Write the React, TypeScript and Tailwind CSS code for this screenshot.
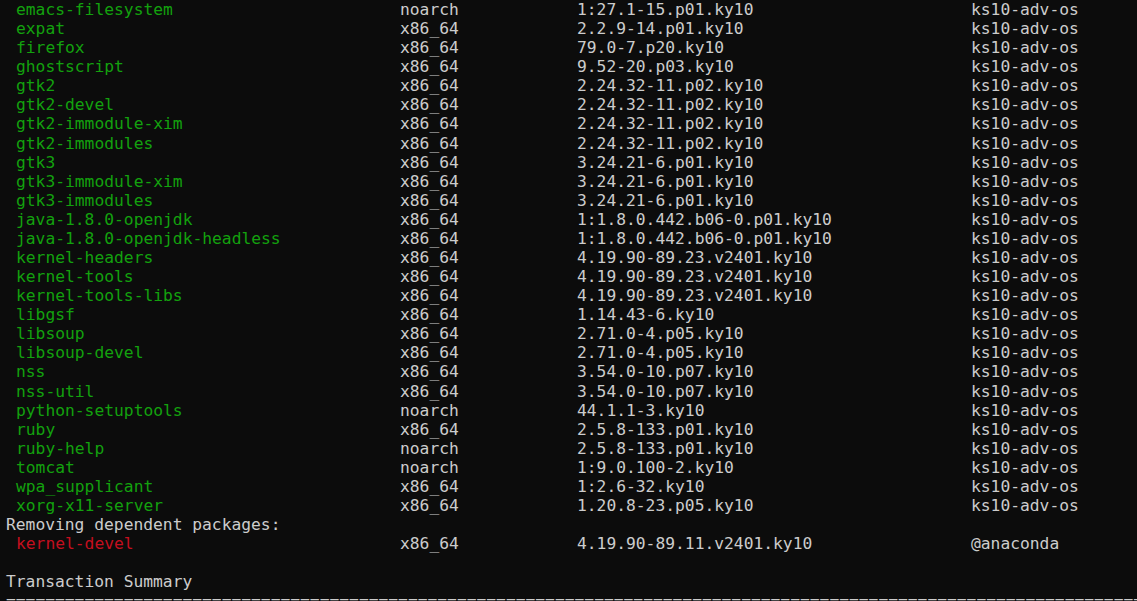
import React from "react";

type Pkg = [string, string, string, string];

const pkgs: Pkg[] = [
  ["emacs-filesystem", "noarch", "1:27.1-15.p01.ky10", "ks10-adv-os"],
  ["expat", "x86_64", "2.2.9-14.p01.ky10", "ks10-adv-os"],
  ["firefox", "x86_64", "79.0-7.p20.ky10", "ks10-adv-os"],
  ["ghostscript", "x86_64", "9.52-20.p03.ky10", "ks10-adv-os"],
  ["gtk2", "x86_64", "2.24.32-11.p02.ky10", "ks10-adv-os"],
  ["gtk2-devel", "x86_64", "2.24.32-11.p02.ky10", "ks10-adv-os"],
  ["gtk2-immodule-xim", "x86_64", "2.24.32-11.p02.ky10", "ks10-adv-os"],
  ["gtk2-immodules", "x86_64", "2.24.32-11.p02.ky10", "ks10-adv-os"],
  ["gtk3", "x86_64", "3.24.21-6.p01.ky10", "ks10-adv-os"],
  ["gtk3-immodule-xim", "x86_64", "3.24.21-6.p01.ky10", "ks10-adv-os"],
  ["gtk3-immodules", "x86_64", "3.24.21-6.p01.ky10", "ks10-adv-os"],
  ["java-1.8.0-openjdk", "x86_64", "1:1.8.0.442.b06-0.p01.ky10", "ks10-adv-os"],
  ["java-1.8.0-openjdk-headless", "x86_64", "1:1.8.0.442.b06-0.p01.ky10", "ks10-adv-os"],
  ["kernel-headers", "x86_64", "4.19.90-89.23.v2401.ky10", "ks10-adv-os"],
  ["kernel-tools", "x86_64", "4.19.90-89.23.v2401.ky10", "ks10-adv-os"],
  ["kernel-tools-libs", "x86_64", "4.19.90-89.23.v2401.ky10", "ks10-adv-os"],
  ["libgsf", "x86_64", "1.14.43-6.ky10", "ks10-adv-os"],
  ["libsoup", "x86_64", "2.71.0-4.p05.ky10", "ks10-adv-os"],
  ["libsoup-devel", "x86_64", "2.71.0-4.p05.ky10", "ks10-adv-os"],
  ["nss", "x86_64", "3.54.0-10.p07.ky10", "ks10-adv-os"],
  ["nss-util", "x86_64", "3.54.0-10.p07.ky10", "ks10-adv-os"],
  ["python-setuptools", "noarch", "44.1.1-3.ky10", "ks10-adv-os"],
  ["ruby", "x86_64", "2.5.8-133.p01.ky10", "ks10-adv-os"],
  ["ruby-help", "noarch", "2.5.8-133.p01.ky10", "ks10-adv-os"],
  ["tomcat", "noarch", "1:9.0.100-2.ky10", "ks10-adv-os"],
  ["wpa_supplicant", "x86_64", "1:2.6-32.ky10", "ks10-adv-os"],
  ["xorg-x11-server", "x86_64", "1.20.8-23.p05.ky10", "ks10-adv-os"],
];

const Row = ({ p, nameColor }: { p: Pkg; nameColor: string }) => (
  <div className="flex h-[19.08px] items-center whitespace-pre">
    <span className={`w-[394px] pl-[10px] ${nameColor}`}>{p[0]}</span>
    <span className="w-[177px]">{p[1]}</span>
    <span className="w-[394px]">{p[2]}</span>
    <span>{p[3]}</span>
  </div>
);

export default function App() {
  return (
    <div
      className="h-[601px] w-[1137px] overflow-hidden bg-[#0c0c0c] pl-[6px] text-[16.3px] leading-[19.08px] text-[#cccccc]"
      style={{ fontFamily: '"DejaVu Sans Mono", "Liberation Mono", monospace' }}
    >
      {pkgs.map((p) => (
        <Row key={p[0]} p={p} nameColor="text-[#13a10e]" />
      ))}
      <div className="h-[19.08px] whitespace-pre">Removing dependent packages:</div>
      <Row
        p={["kernel-devel", "x86_64", "4.19.90-89.11.v2401.ky10", "@anaconda"]}
        nameColor="text-[#c50f1f]"
      />
      <div className="h-[19.08px]" />
      <div className="h-[19.08px] whitespace-pre">Transaction Summary</div>
      <div className="h-[19.08px] whitespace-pre">{"=".repeat(120)}</div>
    </div>
  );
}
